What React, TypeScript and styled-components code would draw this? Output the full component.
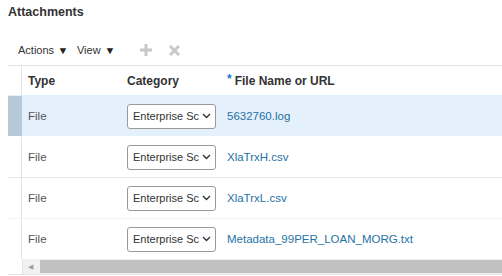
import React from "react";
import styled, { createGlobalStyle } from "styled-components";

const rows = [
  { type: "File", category: "Enterprise Scheduler", file: "5632760.log", selected: true },
  { type: "File", category: "Enterprise Scheduler", file: "XlaTrxH.csv" },
  { type: "File", category: "Enterprise Scheduler", file: "XlaTrxL.csv" },
  { type: "File", category: "Enterprise Scheduler", file: "Metadata_99PER_LOAN_MORG.txt" },
];

export default function App() {
  return (
    <>
      <GlobalStyle />
      <Page>
        <Title>Attachments</Title>
        <Toolbar>
          <Menu>
            Actions <Caret>▼</Caret>
          </Menu>
          <Menu>
            View <Caret>▼</Caret>
          </Menu>
          <AddButton aria-label="Add">
            <svg width="12" height="12" viewBox="0 0 12 12">
              <path d="M6 0v12M0 6h12" stroke="#c8c8c8" strokeWidth="3" />
            </svg>
          </AddButton>
          <DeleteButton aria-label="Delete">
            <svg width="11" height="11" viewBox="0 0 11 11">
              <path d="M1 1l9 9M10 1L1 10" stroke="#c8c8c8" strokeWidth="3" />
            </svg>
          </DeleteButton>
        </Toolbar>
        <Table>
          <HeaderRow>
            <Selector />
            <HeadCell>Type</HeadCell>
            <HeadCell>Category</HeadCell>
            <HeadCell>
              <Required>*</Required> File Name or URL
            </HeadCell>
          </HeaderRow>
          {rows.map((r, i) => (
            <Row key={i} $selected={r.selected} $divider={i === 2 ? "#e6e6e6" : i === 3 ? "#f2f2f2" : "transparent"}>
              <Selector $selected={r.selected} />
              <Cell $muted>{r.type}</Cell>
              <Cell>
                <SelectBox>
                  <SelectText>{r.category}</SelectText>
                  <svg width="9" height="6" viewBox="0 0 9 6">
                    <path d="M1 1l3.5 3.5L8 1" fill="none" stroke="#333" strokeWidth="1.4" />
                  </svg>
                </SelectBox>
              </Cell>
              <Cell>
                <FileLink href="#">{r.file}</FileLink>
              </Cell>
            </Row>
          ))}
          <Scrollbar>
            <ScrollArrow>◀</ScrollArrow>
            <ScrollThumb />
          </Scrollbar>
        </Table>
      </Page>
    </>
  );
}

const GlobalStyle = createGlobalStyle`
  html, body {
    margin: 0;
    padding: 0;
    background: #fff;
    font-family: "Liberation Sans", Arial, sans-serif;
    overflow: hidden;
  }
`;

const Page = styled.div`
  width: 502px;
  height: 276px;
  padding-left: 8px;
  box-sizing: border-box;
  overflow: hidden;
`;

const Title = styled.h1`
  margin: 0;
  padding-top: 4px;
  height: 22px;
  font-size: 12.5px;
  font-weight: bold;
  color: #333;
  line-height: 16px;
`;

const Toolbar = styled.div`
  display: flex;
  align-items: center;
  height: 20px;
  margin-top: 14px;
  padding-left: 10px;
  gap: 9px;
`;

const Menu = styled.span`
  font-size: 11px;
  color: #333;
  display: flex;
  align-items: center;
  gap: 4px;
`;

const Caret = styled.span`
  font-size: 10px;
  color: #222;
  transform: scaleX(1.1);
`;

const AddButton = styled.span`
  display: flex;
  align-items: center;
  margin-left: 16px;
`;

const DeleteButton = styled.span`
  display: flex;
  align-items: center;
  margin-left: 8px;
`;

const Table = styled.div`
  margin-top: 5px;
  width: 494px;
  border-top: 1px solid #e4e4e4;
  border-bottom: 1px solid #e4e4e4;
`;

const HeaderRow = styled.div`
  display: grid;
  grid-template-columns: 14px 99px 100px 1fr;
  height: 29px;
  align-items: stretch;
`;

const Row = styled.div<{ $selected?: boolean; $divider: string }>`
  display: grid;
  grid-template-columns: 14px 99px 100px 1fr;
  height: 41px;
  background: ${(p) => (p.$selected ? "#e4f0fc" : "#fff")};
  border-top: 1px solid ${(p) => p.$divider};
  box-sizing: border-box;
`;

const Selector = styled.div<{ $selected?: boolean }>`
  background: ${(p) => (p.$selected ? "#b5c9d9" : "transparent")};
  border-right: 1px solid ${(p) => (p.$selected ? "#b5c9d9" : "#e4e4e4")};
`;

const HeadCell = styled.div`
  display: flex;
  align-items: center;
  padding-left: 6px;
  font-size: 12px;
  font-weight: bold;
  color: #333;
  white-space: nowrap;
`;

const Required = styled.span`
  color: #1a7bd6;
  font-size: 12px;
  margin-right: 3px;
  position: relative;
  top: -2px;
`;

const Cell = styled.div<{ $muted?: boolean }>`
  display: flex;
  align-items: center;
  padding-left: 6px;
  font-size: 11.5px;
  color: ${(p) => (p.$muted ? "#555" : "#333")};
  white-space: nowrap;
`;

const SelectBox = styled.div`
  width: 89px;
  height: 25px;
  box-sizing: border-box;
  border: 1px solid #9a9a9a;
  border-radius: 3px;
  background: #fff;
  display: flex;
  align-items: center;
  padding: 0 4px 0 5px;
  gap: 3px;
  overflow: hidden;
`;

const SelectText = styled.span`
  flex: 1;
  min-width: 0;
  overflow: hidden;
  font-size: 11px;
  color: #333;
  white-space: nowrap;
`;

const FileLink = styled.a`
  color: #1f72a6;
  text-decoration: none;
  font-size: 11.5px;
`;

const Scrollbar = styled.div`
  display: flex;
  align-items: center;
  height: 15px;
  margin-left: 14px;
  background: #f1f1f1;
  border-left: 1px solid #e4e4e4;
  padding: 0 0 0 5px;
`;

const ScrollArrow = styled.span`
  font-size: 7px;
  color: #a0a0a0;
  width: 12px;
`;

const ScrollThumb = styled.div`
  flex: 1;
  height: 13px;
  background: #c1c1c1;
`;
